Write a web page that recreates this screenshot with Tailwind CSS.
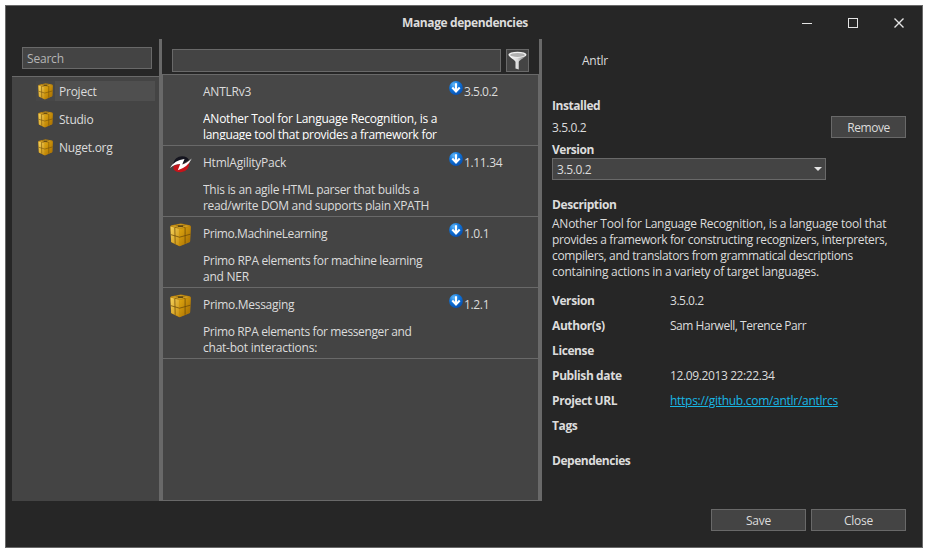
<!DOCTYPE html>
<html lang="en">
<head>
<meta charset="utf-8">
<title>Manage dependencies</title>
<script src="https://cdn.jsdelivr.net/npm/@tailwindcss/browser@4"></script>
</head>
<body class="bg-white p-[5px] font-['Open_Sans','Noto_Sans',sans-serif] text-[12px] leading-4 text-[#dcdcdc] tracking-[-0.24px] overflow-hidden whitespace-nowrap">
<svg width="0" height="0" class="absolute" aria-hidden="true">
  <defs>
    <linearGradient id="gl" x1="0" y1="0" x2="1" y2="1"><stop offset="0" stop-color="#f5d25c"/><stop offset="1" stop-color="#c98f0c"/></linearGradient>
    <linearGradient id="gr" x1="0" y1="0" x2="1" y2="1"><stop offset="0" stop-color="#e0a810"/><stop offset="1" stop-color="#a36a00"/></linearGradient>
    <linearGradient id="gf" x1="0" y1="0" x2="1" y2="0"><stop offset="0" stop-color="#ffffff"/><stop offset=".5" stop-color="#dcdcdc"/><stop offset="1" stop-color="#6c6c6c"/></linearGradient>
    <radialGradient id="gb" cx=".35" cy=".25" r=".85"><stop offset="0" stop-color="#63b8f8"/><stop offset=".45" stop-color="#0f74da"/><stop offset="1" stop-color="#0649a8"/></radialGradient>
    <symbol id="box" viewBox="0 0 22 24">
      <path d="M.8 3.400Q.8 2.600 2 2.300L10 .7Q11.500.5 13 .8L20.200 2.200Q21.300 2.500 21.300 3.500L20.700 18Q20.700 18.800 20 19.200L11 23.100Q10.200 23.400 9.400 23L2.300 19.500Q1.500 19 1.500 18.200z" fill="#b57c08"/>
      <path d="M1.200 3 11 .9 20.800 2.900 10 5.800z" fill="#cf9d22"/>
      <path d="M1 3.600 10 6 10 23 1.700 19z" fill="url(#gl)"/>
      <path d="M10 6 21.100 3.500 20.500 18.500 10 23z" fill="url(#gr)"/>
      <path d="M5.300 4.700 5.700 20.800M15.600 4.600 15.600 20.700M1.200 11.600 10 14.200 20.900 11.200" fill="none" stroke="#6b4a08" stroke-opacity=".75" stroke-width="1"/>
      <path d="M5.300 4.700 16 1.900M6 1.900 15.600 4.600" fill="none" stroke="#6b4a08" stroke-opacity=".6" stroke-width=".8"/>
      <path d="M8.500 3.100h5" stroke="#493813" stroke-width="1.300"/>
    </symbol>
    <symbol id="down" viewBox="0 0 14 14">
      <circle cx="7" cy="7" r="6.900" fill="url(#gb)"/>
      <path d="M7 2.300V10.200M3.300 6.600 7 10.400 10.700 6.600" fill="none" stroke="#fff" stroke-width="2.100"/>
    </symbol>
  </defs>
</svg>
<main class="flex h-[543px] w-[918px] flex-col border border-[#696969] bg-[#262626]">
  <header class="grid h-[33px] grid-cols-[1fr_auto_1fr] items-center">
    <span></span>
    <h1 class="pl-[2px] font-bold tracking-[-0.4px]">Manage dependencies</h1>
    <div class="flex justify-end gap-9 pr-[18px]">
      <svg width="10" height="10" shape-rendering="crispEdges"><path d="M0 5.5h10" stroke="#e4e4e4"/></svg>
      <svg width="10" height="10" shape-rendering="crispEdges"><rect x=".5" y=".5" width="9" height="9" fill="none" stroke="#e4e4e4"/></svg>
      <svg width="10" height="10"><path d="M.5.5l9 9M9.5.5l-9 9" stroke="#e4e4e4" stroke-width="1.4"/></svg>
    </div>
  </header>

  <div class="flex h-[462px] pl-[6px]">
    <aside class="flex w-[147px] flex-col">
      <div class="h-[37px] pl-[10px] pt-2">
        <div class="flex h-[22px] w-[130px] items-center border border-[#696969] bg-[#444] pl-1 pt-px text-[#b5b5b5] tracking-[-0.2px]">Search</div>
      </div>
      <nav class="flex flex-1 flex-col gap-2 border-t border-[#696969] bg-[#444] pl-6 pt-1">
        <div class="flex h-5 items-center"><span class="flex h-5 w-[19px] items-center bg-[#474747]"><svg class="ml-px" width="17" height="17"><use href="#box"/></svg></span><span class="flex h-5 w-[100px] items-center bg-[#4f4f4f] pl-1 pt-px">Project</span></div>
        <div class="flex h-5 items-center"><span class="w-[19px]"><svg class="ml-px" width="17" height="17"><use href="#box"/></svg></span><span class="pl-1 pt-px">Studio</span></div>
        <div class="flex h-5 items-center"><span class="w-[19px]"><svg class="ml-px" width="17" height="17"><use href="#box"/></svg></span><span class="pl-1 pt-px">Nuget.org</span></div>
      </nav>
    </aside>
    <div class="w-[3px] bg-[#696969]"></div>

    <section class="flex w-[377px] flex-col">
      <div class="flex h-[35px] gap-[5px] pl-[10px] pt-[10px]">
        <div class="h-[23px] w-[329px] border border-[#696969] bg-[#444]"></div>
        <div class="flex h-[23px] w-[23px] items-center justify-center border border-[#696969] bg-[#444]">
          <svg width="19" height="19" viewBox="0 0 19 19"><path d="M.6 3.500C1 6.500 7.500 9 7.500 11V17.600L10.800 18.600V11C10.800 9 18 6.500 18.400 3.500z" fill="url(#gf)"/><ellipse cx="9.500" cy="3.700" rx="9" ry="3" fill="#f0f0f0"/><ellipse cx="9.500" cy="3.900" rx="7.400" ry="2" fill="#b0b0b0"/></svg>
        </div>
      </div>
      <div class="flex-1 border border-[#696969] bg-[#444]">
        <article class="flex h-[71px] border-b border-[#696969] bg-[#474747] pt-[6px]">
          <div class="w-10"></div>
          <div class="w-[246px]"><div class="h-[30px] pt-[3px]">ANTLRv3</div><div class="h-[29px] overflow-hidden text-white"><div>ANother Tool for Language Recognition, is a</div><div class="tracking-[-0.29px]">language tool that provides a framework for</div></div></div>
          <svg width="14" height="14"><use href="#down"/></svg><span class="pl-px pt-[3px] tracking-[-0.48px]">3.5.0.2</span>
        </article>
        <article class="flex h-[71px] border-b border-[#696969] pt-[6px]">
          <div class="w-10 pl-[7px] pt-[3px]">
            <svg width="22" height="19" viewBox="0 0 22 19"><path d="M3 8.500Q5 1.500 12 1.200 17.500 1.200 19 5L13.500 8.500 8 8z" fill="#15151f"/><path d="M3.500 11Q8 8 12 10L19.300 6.500Q19.500 16.500 11 17.300 5.500 17.500 3.500 14z" fill="#c5141a"/><path d="M0 13Q4.500 5.200 14.500 4L12.200 9.600Q16.500 8.300 21.800 3.500 17.500 12.500 7.800 15.200L10.200 9Q4.500 9.200 0 13z" fill="#fff"/></svg>
          </div>
          <div class="w-[246px]"><div class="h-[30px] pt-[3px]">HtmlAgilityPack</div><div class="h-[29px] overflow-hidden"><div class="tracking-[-0.29px]">This is an agile HTML parser that builds a</div><div class="tracking-[-0.32px]">read/write DOM and supports plain XPATH</div></div></div>
          <svg width="14" height="14"><use href="#down"/></svg><span class="pl-px pt-[3px] tracking-[-0.35px]">1.11.34</span>
        </article>
        <article class="flex h-[71px] border-b border-[#696969] pt-[6px]">
          <div class="w-10 pl-[6px]"><svg width="23" height="24"><use href="#box"/></svg></div>
          <div class="w-[246px]"><div class="h-[30px] pt-[3px] tracking-[-0.43px]">Primo.MachineLearning</div><div class="tracking-[-0.35px]">Primo RPA elements for machine learning</div><div>and NER</div></div>
          <svg width="14" height="14"><use href="#down"/></svg><span class="pl-px pt-[3px] tracking-[-0.35px]">1.0.1</span>
        </article>
        <article class="flex h-[71px] border-b border-[#696969] pt-[6px]">
          <div class="w-10 pl-[6px]"><svg width="23" height="24"><use href="#box"/></svg></div>
          <div class="w-[246px]"><div class="h-[30px] pt-[3px] tracking-[-0.3px]">Primo.Messaging</div><div class="tracking-[-0.38px]">Primo RPA elements for messenger and</div><div>chat-bot interactions:</div></div>
          <svg width="14" height="14"><use href="#down"/></svg><span class="pl-px pt-[3px] tracking-[-0.35px]">1.2.1</span>
        </article>
      </div>
    </section>
    <div class="w-[3px] bg-[#696969]"></div>

    <section class="w-[380px] pl-[10px] pt-[14px]">
      <div class="mb-[29px] pl-[30px]">Antlr</div>
      <div class="flex h-[60px]">
        <div class="w-[279px]"><div class="mb-[6px] font-bold tracking-[-0.45px]">Installed</div><div class="mb-[6px] tracking-[-0.4px]">3.5.0.2</div><div class="font-bold tracking-[-0.5px]">Version</div></div>
        <div class="mt-[18px] flex h-[22px] w-[75px] items-center justify-center border border-[#696969] bg-[#444] pt-px tracking-[-0.45px]">Remove</div>
      </div>
      <div class="flex h-[22px] w-[274px] items-center justify-between border border-[#696969] bg-[#444] pl-1 pr-[3px]"><span class="pt-px tracking-[-0.4px]">3.5.0.2</span><svg width="8" height="4"><path d="M0 0h8L4 4z" fill="#e4e4e4"/></svg></div>
      <div class="mb-[3px] mt-[17px] font-bold tracking-[-0.42px]">Description</div>
      <div class="mb-[13px]"><div>ANother Tool for Language Recognition, is a language tool that</div><div class="tracking-[-0.36px]">provides a framework for constructing recognizers, interpreters,</div><div class="tracking-[-0.36px]">compilers, and translators from grammatical descriptions</div><div>containing actions in a variety of target languages.</div></div>
      <dl class="grid grid-cols-[118px_auto] gap-y-[9px] [&>dt]:font-bold [&>dt]:tracking-[-0.4px]">
        <dt>Version</dt><dd class="tracking-[-0.48px]">3.5.0.2</dd>
        <dt>Author(s)</dt><dd class="tracking-[-0.47px]">Sam Harwell, Terence Parr</dd>
        <dt>License</dt><dd></dd>
        <dt>Publish date</dt><dd class="tracking-[-0.38px]">12.09.2013 22:22.34</dd>
        <dt>Project URL</dt><dd><a class="text-[#18b8e6] underline tracking-[-0.28px]">https://github.com/antlr/antlrcs</a></dd>
        <dt>Tags</dt><dd></dd>
      </dl>
      <div class="mt-[19px] font-bold tracking-[-0.48px]">Dependencies</div>
    </section>
  </div>

  <footer class="flex justify-end gap-[5px] pr-4 pt-2">
    <div class="flex h-[22px] w-[95px] items-center justify-center border border-[#696969] bg-[#444] pt-px">Save</div>
    <div class="flex h-[22px] w-[95px] items-center justify-center border border-[#696969] bg-[#444] pt-px">Close</div>
  </footer>
</main>
</body>
</html>
